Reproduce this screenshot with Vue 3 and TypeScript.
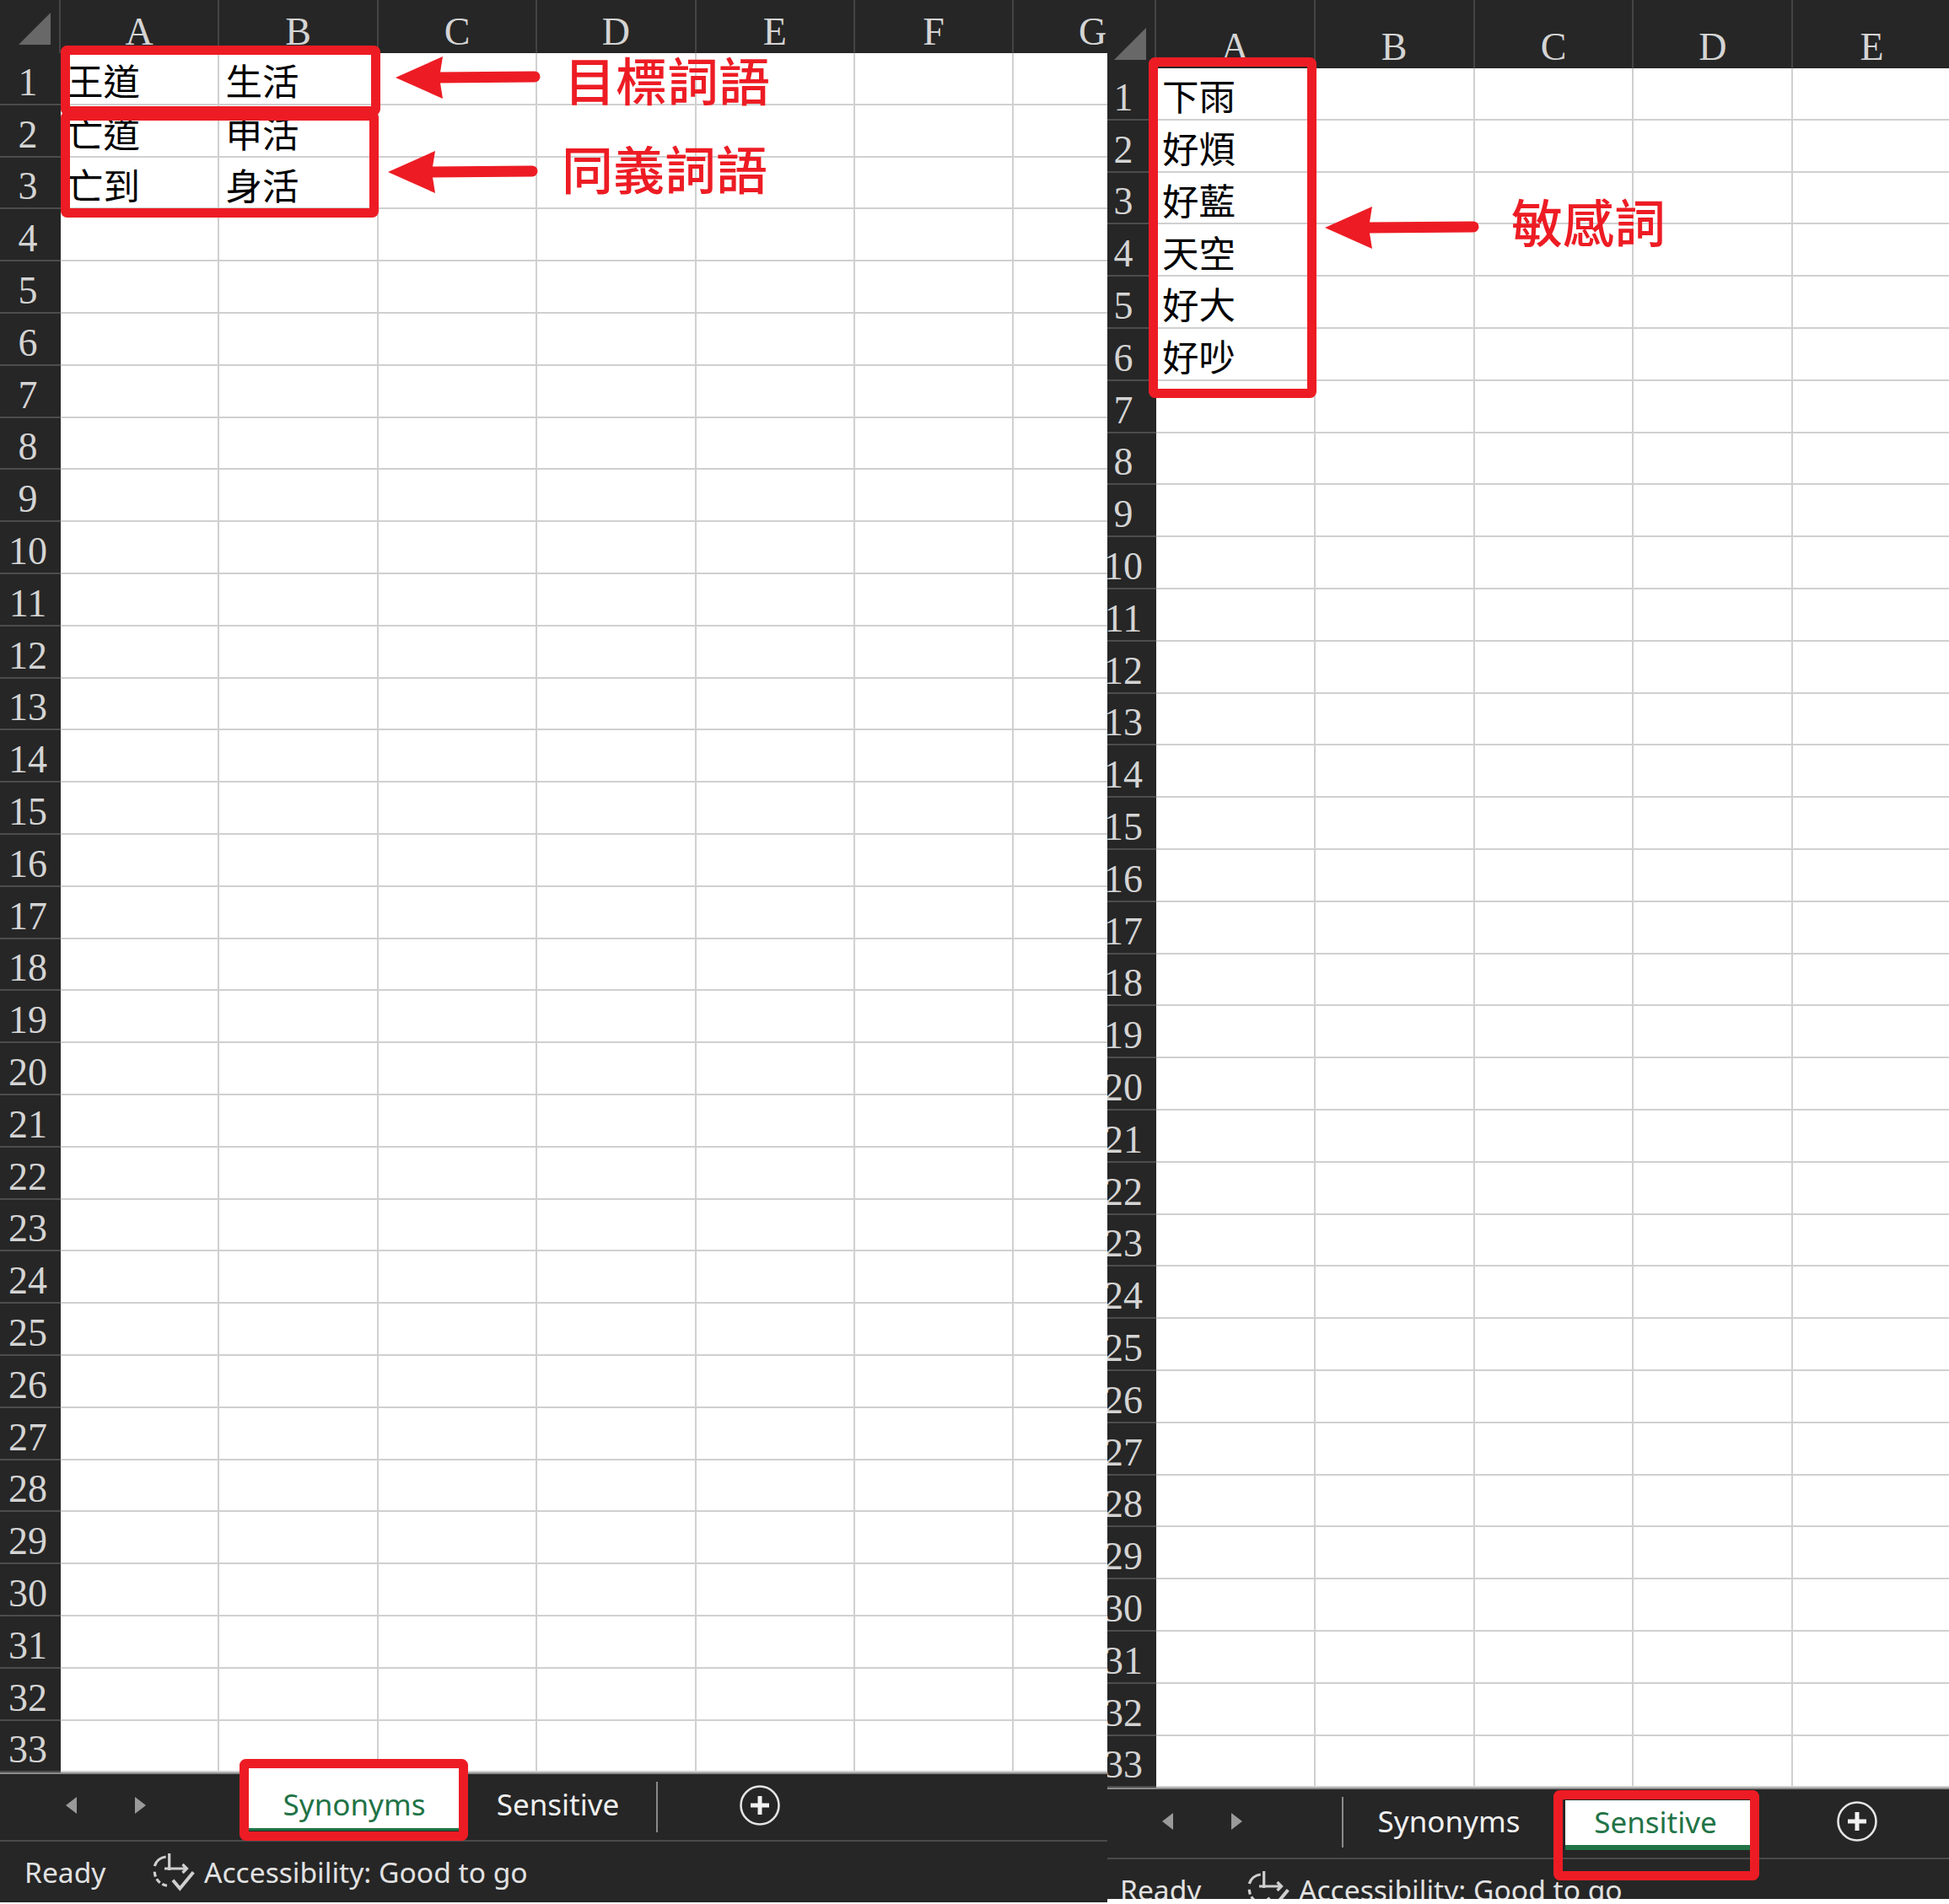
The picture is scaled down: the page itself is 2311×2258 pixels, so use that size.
<script setup lang="ts">
interface Box { x: number; y: number; w: number; h: number }
interface Arrow { tip: number; y: number; back: number; half: number; end: number }
interface Label { text: string; cls: string }
interface Sheet {
  id: string
  columns: string[]
  cells: string[][]
  tabs: { name: string; active: boolean }[]
  boxes: Box[]
  arrows: Arrow[]
  labels: Label[]
}

const rows = Array.from({ length: 33 }, (_, i) => i + 1)

const sheets: Sheet[] = [
  {
    id: 'left',
    columns: ['A', 'B', 'C', 'D', 'E', 'F', 'G'],
    cells: [['王道', '生活'], ['亡道', '申活'], ['亡到', '身活']],
    tabs: [{ name: 'Synonyms', active: true }, { name: 'Sensitive', active: false }],
    boxes: [
      { x: 72, y: 54, w: 379, h: 83 },
      { x: 72, y: 132, w: 377, h: 126 },
      { x: 284, y: 2086, w: 271, h: 97 },
    ],
    arrows: [
      { tip: 469, y: 92, back: 525, half: 25, end: 641 },
      { tip: 460, y: 204, back: 516, half: 25, end: 638 },
    ],
    labels: [
      { text: '目標詞語', cls: 'label-target' },
      { text: '同義詞語', cls: 'label-synonym' },
    ],
  },
  {
    id: 'right',
    columns: ['A', 'B', 'C', 'D', 'E'],
    cells: [['下雨'], ['好煩'], ['好藍'], ['天空'], ['好大'], ['好吵']],
    tabs: [{ name: 'Synonyms', active: false }, { name: 'Sensitive', active: true }],
    boxes: [
      { x: 49, y: 68, w: 199, h: 404 },
      { x: 529, y: 2123, w: 244, h: 107 },
    ],
    arrows: [{ tip: 258, y: 270, back: 314, half: 25, end: 441 }],
    labels: [{ text: '敏感詞', cls: 'label-sensitive' }],
  },
]

function arrowHead(a: Arrow): string {
  return `${a.tip},${a.y} ${a.back},${a.y - a.half} ${a.back - 4},${a.y} ${a.back},${a.y + a.half}`
}
</script>

<template>
  <main class="desk">
    <section v-for="sheet in sheets" :key="sheet.id" class="sheet" :class="`sheet-${sheet.id}`">
      <header class="col-head">
        <div class="corner"><span class="corner-mark"></span></div>
        <div v-for="col in sheet.columns" :key="col" class="col-name">{{ col }}</div>
      </header>

      <div class="grid">
        <div v-for="row in rows" :key="row" class="row">
          <div class="row-name"><span>{{ row }}</span></div>
          <div v-for="(col, c) in sheet.columns" :key="col" class="cell">
            {{ sheet.cells[row - 1]?.[c] ?? '' }}
          </div>
        </div>
      </div>

      <nav class="tabbar">
        <span class="nav nav-prev"></span>
        <span class="nav nav-next"></span>
        <span v-if="sheet.id === 'right'" class="tab-sep tab-sep-first"></span>
        <span
          v-for="tab in sheet.tabs"
          :key="tab.name"
          class="tab"
          :class="[{ 'tab-active': tab.active }, `tab-${tab.name.toLowerCase()}`]"
        >{{ tab.name }}</span>
        <span v-if="sheet.id === 'left'" class="tab-sep"></span>
        <svg class="add" viewBox="0 0 48 48" aria-hidden="true">
          <circle cx="24" cy="24" r="22.5" fill="none" stroke="#e4e4e4" stroke-width="2.6" />
          <path d="M24 13v22M13 24h22" stroke="#f2f2f2" stroke-width="5" fill="none" />
        </svg>
      </nav>

      <footer class="status">
        <span class="ready">Ready</span>
        <svg class="a11y" viewBox="0 0 54 48" aria-hidden="true">
          <g fill="none" stroke="#cfcfcf" stroke-width="3.2">
            <path d="M18.7 6A15.5 15.5 0 0 0 5.3 17" />
            <path d="M5.3 23.7A17 17 0 0 0 20.3 40.3" stroke-dasharray="6 3" />
            <path d="M22.7 2V22M17 20H43.5M38.5 15l5 5-5 5" />
            <path d="M27 33.7l8.3 10L51.3 24.3" stroke-width="4" />
          </g>
        </svg>
        <span class="a11y-text">Accessibility: Good to go</span>
      </footer>

      <svg class="marks" width="1313" height="2258" aria-hidden="true">
        <rect
          v-for="(b, i) in sheet.boxes"
          :key="i"
          :x="b.x + 5.5"
          :y="b.y + 5.5"
          :width="b.w - 11"
          :height="b.h - 11"
          rx="2"
          fill="none"
          stroke="#ed1c24"
          stroke-width="11"
        />
        <g v-for="(a, i) in sheet.arrows" :key="i">
          <line
            :x1="a.back - 4"
            :y1="a.y"
            :x2="a.end - 7"
            :y2="a.y - 1"
            stroke="#ed1c24"
            stroke-width="13"
            stroke-linecap="round"
          />
          <polygon :points="arrowHead(a)" fill="#ed1c24" />
        </g>
      </svg>
      <span v-for="l in sheet.labels" :key="l.text" class="label" :class="l.cls">{{ l.text }}</span>
    </section>
  </main>
</template>

<style>
html,
body {
  margin: 0;
  background: #ffffff;
}
</style>

<style scoped>
.desk {
  display: flex;
  width: 2311px;
  height: 2258px;
  overflow: hidden;
  background: #ffffff;
}

.sheet {
  position: relative;
  display: flex;
  flex-direction: column;
  flex: none;
  overflow: hidden;
  background: #ffffff;
}
.sheet-left {
  width: 1313px;
  height: 2256px;
  --head: 63px;
  --row-head: 72px;
  --col: 188.4px;
  --num-shift: -3px;
  --bar: 82px;
}
.sheet-right {
  width: 998px;
  height: 2252px;
  --head: 81px;
  --row-head: 58px;
  --col: 188.8px;
  --num-shift: -10px;
  --bar: 85px;
}

/* column header */
.col-head {
  display: flex;
  flex: none;
  height: var(--head);
  background: #262626;
  color: #d4d4d4;
  font: 46px/46px "Liberation Serif", serif;
}
.corner {
  position: relative;
  flex: none;
  width: var(--row-head);
  box-sizing: border-box;
  border-right: 2px solid #444444;
}
.corner-mark {
  position: absolute;
  right: 10px;
  bottom: 10px;
  width: 38px;
  height: 38px;
  background: #686868;
  clip-path: polygon(100% 0, 100% 100%, 0 100%);
}
.col-name {
  display: flex;
  flex: none;
  width: var(--col);
  box-sizing: border-box;
  align-items: flex-end;
  justify-content: center;
  padding-bottom: 2px;
  border-right: 2px solid #444444;
}

/* grid */
.grid {
  flex: none;
}
.row {
  display: flex;
  height: 61.8px;
}
.row-name {
  display: flex;
  flex: none;
  width: var(--row-head);
  box-sizing: border-box;
  align-items: center;
  justify-content: center;
  border-bottom: 2px solid #4c4c4c;
  background: #262626;
  color: #d4d4d4;
  font: 46px/1 "Liberation Serif", serif;
}
.row-name span {
  transform: translate(var(--num-shift), 5px);
}
.cell {
  display: flex;
  flex: none;
  width: var(--col);
  box-sizing: border-box;
  align-items: center;
  padding: 4px 0 0 7px;
  border-right: 2px solid #d0d0d0;
  border-bottom: 2px solid #d0d0d0;
  color: #000000;
  font: 400 43.5px/1 "Noto Sans CJK TC", sans-serif;
  white-space: nowrap;
}

/* sheet tabs */
.tabbar {
  position: relative;
  display: flex;
  flex: none;
  height: var(--bar);
  box-sizing: border-box;
  align-items: flex-start;
  border-top: 2px solid #8c8c8c;
  border-bottom: 2px solid #4a4a4a;
  background: #262626;
  color: #f0f0f0;
  font: 35px/1 "Noto Sans", sans-serif;
}
.nav {
  flex: none;
  width: 0;
  height: 0;
  margin-top: 27px;
  border-top: 10px solid transparent;
  border-bottom: 10px solid transparent;
}
.nav-prev {
  margin-left: 78px;
  border-right: 13px solid #9a9a9a;
}
.nav-next {
  margin-left: 69px;
  border-left: 13px solid #9a9a9a;
}
.sheet-right .nav {
  margin-top: 28px;
}
.sheet-right .nav-prev {
  margin-left: 65px;
}
.tab {
  display: flex;
  flex: none;
  box-sizing: border-box;
  align-items: center;
  justify-content: center;
}
.tab-active {
  background: #ffffff;
  color: #217346;
}
.sheet-left .tab-synonyms {
  width: 250px;
  height: 74px;
  margin: -7px 0 0 122px;
  padding-top: 13px;
  border-bottom: 3px solid #217346;
}
.sheet-left .tab-sensitive {
  width: 233px;
  height: 70px;
}
.sheet-right .tab-synonyms {
  width: 250px;
  height: 74px;
}
.sheet-right .tab-sensitive {
  width: 222px;
  height: 59px;
  margin: 13px 0 0 13px;
  padding: 0 8px 3px 0;
  border-bottom: 6px solid #217346;
}
.tab-sep {
  flex: none;
  width: 2px;
  height: 60px;
  margin-top: 9px;
  background: #8a8a8a;
}
.tab-sep-first {
  margin-left: 118px;
}
.add {
  flex: none;
  width: 48px;
  height: 48px;
  margin-top: 13px;
}
.sheet-left .add {
  margin-left: 97px;
}
.sheet-right .add {
  margin-top: 14px;
  margin-left: 100px;
}

/* status bar */
.status {
  display: flex;
  flex: none;
  height: 74px;
  box-sizing: border-box;
  align-items: center;
  padding-left: 29px;
  padding-bottom: 2px;
  background: #262626;
  color: #e2e2e2;
  font: 33.6px/1 "Noto Sans", sans-serif;
}
.sheet-right .status {
  padding-left: 15px;
}
.ready {
  flex: none;
  width: 149px;
}
.sheet-right .ready {
  width: 148px;
}
.a11y {
  flex: none;
  width: 54px;
  height: 48px;
}
.a11y-text {
  margin-left: 10px;
  white-space: nowrap;
}

/* annotations drawn over the sheet */
.marks {
  position: absolute;
  top: 0;
  left: 0;
  pointer-events: none;
}
.label {
  position: absolute;
  color: #ed1c24;
  font: 500 61px/1 "Noto Sans CJK TC", sans-serif;
  white-space: nowrap;
}
.label-target {
  top: 63px;
  left: 669px;
}
.label-synonym {
  top: 168px;
  left: 666px;
}
.label-sensitive {
  top: 231px;
  left: 479px;
}
</style>
